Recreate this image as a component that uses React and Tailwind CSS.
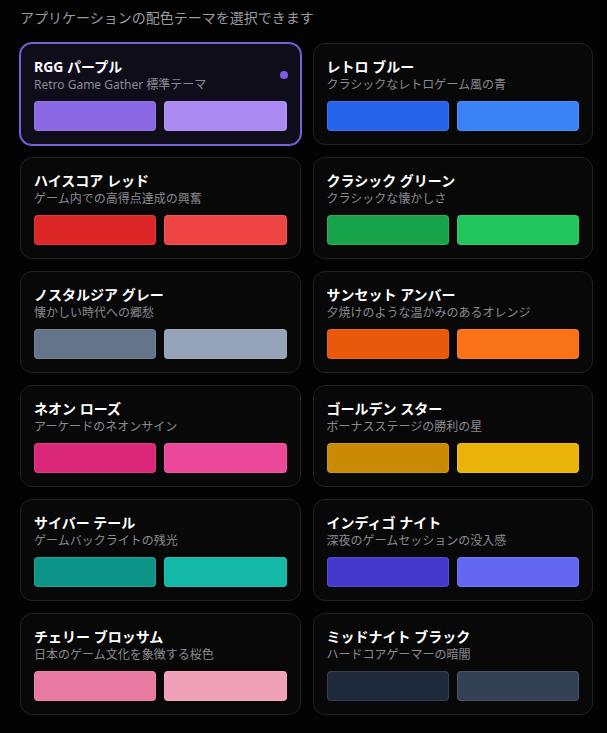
const themes = [
  { name: "RGG パープル", desc: "Retro Game Gather 標準テーマ", a: "bg-[#8a67e3]", b: "bg-[#ab8af2]", active: true },
  { name: "レトロ ブルー", desc: "クラシックなレトロゲーム風の青", a: "bg-[#2563eb]", b: "bg-[#3b82f6]" },
  { name: "ハイスコア レッド", desc: "ゲーム内での高得点達成の興奮", a: "bg-[#dc2626]", b: "bg-[#ef4444]" },
  { name: "クラシック グリーン", desc: "クラシックな懐かしさ", a: "bg-[#16a34a]", b: "bg-[#22c55e]" },
  { name: "ノスタルジア グレー", desc: "懐かしい時代への郷愁", a: "bg-[#64748b]", b: "bg-[#94a3b8]" },
  { name: "サンセット アンバー", desc: "夕焼けのような温かみのあるオレンジ", a: "bg-[#ea580c]", b: "bg-[#f97316]" },
  { name: "ネオン ローズ", desc: "アーケードのネオンサイン", a: "bg-[#db2777]", b: "bg-[#ec4899]" },
  { name: "ゴールデン スター", desc: "ボーナスステージの勝利の星", a: "bg-[#ca8a04]", b: "bg-[#eab308]" },
  { name: "サイバー テール", desc: "ゲームバックライトの残光", a: "bg-[#0d9488]", b: "bg-[#14b8a6]" },
  { name: "インディゴ ナイト", desc: "深夜のゲームセッションの没入感", a: "bg-[#4338ca]", b: "bg-[#6366f1]" },
  { name: "チェリー ブロッサム", desc: "日本のゲーム文化を象徴する桜色", a: "bg-[#e879a0]", b: "bg-[#f0a0b9]" },
  { name: "ミッドナイト ブラック", desc: "ハードコアゲーマーの暗闇", a: "bg-[#1e293b]", b: "bg-[#334155]" },
];

const App = () => {
  return (
    <div
      className="bg-[#030303] min-h-screen text-white pl-5 pr-[14px] pt-2"
      style={{ fontFamily: '"Noto Sans", "Noto Sans CJK JP", sans-serif' }}
    >
      <p className="text-sm leading-5 text-[#9a9aa0] mb-[15px]">
        アプリケーションの配色テーマを選択できます
      </p>
      <div className="grid grid-cols-2 gap-3">
        {themes.map((t, i) => (
          <div
            key={i}
            className={
              t.active
                ? "relative rounded-xl border border-[#7a5fd6] ring-1 ring-[#7a5fd6] bg-[#100d1a] p-[13px]"
                : "relative rounded-xl border border-[#1f1f24] bg-[#080808] p-[13px]"
            }
          >
            {t.active && (
              <span className="absolute right-3 top-[27px] w-2 h-2 rounded-full bg-[#7a5ce8]"></span>
            )}
            <div className="text-sm leading-5 font-bold text-white">{t.name}</div>
            <div className="text-xs leading-4 text-[#8a8a90]">{t.desc}</div>
            <div className="flex gap-2 mt-2">
              <div className={"flex-1 h-[30px] rounded border border-white/10 " + t.a}></div>
              <div className={"flex-1 h-[30px] rounded border border-white/10 " + t.b}></div>
            </div>
          </div>
        ))}
      </div>
    </div>
  );
};

export default App;
